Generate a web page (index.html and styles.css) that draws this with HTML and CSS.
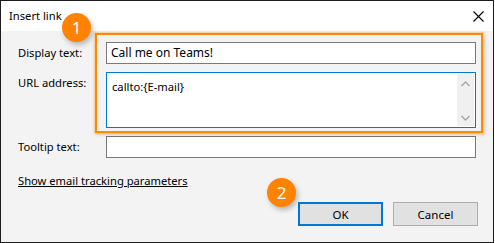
FILE: index.html
```html
<!DOCTYPE html>
<html lang="en">

<head>
    <meta charset="UTF-8">
    <title>Insert link</title>
    <link rel="stylesheet" href="styles.css">
</head>

<body>
    <div class="dialog">
        <div class="titlebar">
            <span class="title">Insert link</span>
            <svg class="close" width="11" height="11" viewBox="0 0 11 11">
                <path d="M0.5 0.5 L10.5 10.5 M10.5 0.5 L0.5 10.5" stroke="#000" stroke-width="1.1" fill="none" />
            </svg>
        </div>
        <div class="content">
            <div class="form">
                <label class="label">Display text:</label>
                <div class="field">Call me on Teams!</div>

                <label class="label">URL address:</label>
                <div class="field area">
                    <span class="area-text">callto:{E-mail}</span>
                    <div class="scrollbar">
                        <svg width="9" height="6" viewBox="0 0 9 6">
                            <path d="M0.5 5 L4.5 1 L8.5 5" stroke="#a6a6a6" stroke-width="1.4" fill="none" />
                        </svg>
                        <svg width="9" height="6" viewBox="0 0 9 6">
                            <path d="M0.5 1 L4.5 5 L8.5 1" stroke="#a6a6a6" stroke-width="1.4" fill="none" />
                        </svg>
                    </div>
                </div>

                <label class="label">Tooltip text:</label>
                <div class="field"></div>
            </div>

            <a class="tracking" href="#">Show email tracking parameters</a>

            <div class="buttons">
                <button class="btn btn-default">OK</button>
                <button class="btn">Cancel</button>
            </div>
        </div>

        <!-- annotation overlay -->
        <div class="highlight"></div>
        <div class="badge badge-one">1</div>
        <div class="badge badge-two">2</div>
    </div>
</body>

</html>
```

FILE: styles.css
```css
body {
    margin: 0;
    font-family: "Noto Sans", "Open Sans", sans-serif;
    font-size: 11.2px;
    color: #000;
    background: #fff;
}

.dialog {
    position: relative;
    width: 492px;
    height: 241px;
    border: 1px solid #1c1c1c;
    background: #f3f3f3;
    display: flex;
    flex-direction: column;
}

.titlebar {
    height: 30px;
    background: #fff;
    display: flex;
    align-items: center;
    justify-content: space-between;
    padding: 0 9px 0 8px;
}

.title {
    margin-top: -2px;
}

.content {
    flex: 1;
    display: flex;
    flex-direction: column;
    padding: 11px 15px 0 17px;
}

.form {
    display: grid;
    grid-template-columns: 88px 370px;
    row-gap: 8px;
}

.label {
    line-height: 22px;
}

.field {
    height: 22px;
    box-sizing: border-box;
    border: 1px solid #7a7a7a;
    background: #fff;
    padding: 0 4px;
    line-height: 19px;
    font-size: 12px;
}

.field.area {
    height: 56px;
    border-color: #0078d7;
    display: flex;
    justify-content: space-between;
    padding: 0 1px 0 5px;
}

.area-text {
    padding-top: 4px;
    font-size: 11.2px;
}

.scrollbar {
    width: 17px;
    margin: 1px 0;
    background: #f0f0f0;
    display: flex;
    flex-direction: column;
    justify-content: space-between;
    align-items: center;
    padding: 7px 0 5px;
}

.scrollbar svg {
    display: block;
}

.tracking {
    margin-top: 15px;
    color: #000;
    align-self: flex-start;
}

.buttons {
    margin-top: 14px;
    display: flex;
    justify-content: flex-end;
    gap: 10px;
}

.btn {
    width: 85px;
    height: 24px;
    font-family: inherit;
    font-size: 11.5px;
    background: #e1e1e1;
    border: 1px solid #adadad;
    padding: 0;
}

.btn-default {
    border: 2px solid #0078d7;
}

.highlight {
    position: absolute;
    left: 94px;
    top: 32px;
    width: 384px;
    height: 96px;
    border: 2px solid #ff8a00;
    box-shadow: 0 0 2px 1px rgba(255, 170, 80, 0.6), 2px 2px 4px rgba(0, 0, 0, 0.12);
}

.badge {
    position: absolute;
    width: 29px;
    height: 29px;
    border-radius: 50%;
    background: #ff8200;
    color: #fff;
    font-size: 17px;
    line-height: 29px;
    text-align: center;
    box-shadow: 2px 3px 5px rgba(0, 0, 0, 0.25);
}

.badge-one {
    left: 61px;
    top: 12px;
}

.badge-two {
    left: 266px;
    top: 177px;
}
```
